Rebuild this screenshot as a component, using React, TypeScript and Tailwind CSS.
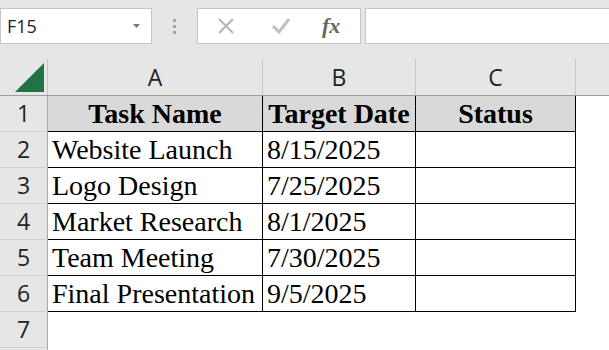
import React from 'react';

type Task = { name: string; date: string; status: string };

const tasks: Task[] = [
  { name: 'Website Launch', date: '8/15/2025', status: '' },
  { name: 'Logo Design', date: '7/25/2025', status: '' },
  { name: 'Market Research', date: '8/1/2025', status: '' },
  { name: 'Team Meeting', date: '7/30/2025', status: '' },
  { name: 'Final Presentation', date: '9/5/2025', status: '' },
];

const RowHead: React.FC<{ n: number }> = ({ n }) => (
  <div className="w-[48px] h-full shrink-0 flex items-center justify-center border-r border-b border-r-[#a8a8a8] border-b-[#cfcfcf] bg-[#e6e6e6] text-[23px] text-[#222]">
    {n}
  </div>
);

const Cell: React.FC<{ w: string; header?: boolean; children?: React.ReactNode }> = ({
  w,
  header,
  children,
}) => (
  <div
    className={`${w} h-full shrink-0 flex items-center border-r border-b border-black font-['Liberation_Serif','Times_New_Roman',serif] text-[28px] text-black ${
      header ? 'bg-[#d9d9d9] font-bold justify-center' : 'bg-white pl-[4px]'
    }`}
  >
    {children}
  </div>
);

const App: React.FC = () => {
  return (
    <div className="w-[609px] h-[350px] overflow-hidden bg-[#e6e6e6] font-['Open_Sans',sans-serif]">
      {/* Formula bar */}
      <div className="h-[59px] flex items-start pt-[8px]">
        <div className="w-[152px] h-[36px] shrink-0 bg-white border border-[#c6c6c6] flex items-center justify-between pl-[6px] pr-[11px]">
          <span className="text-[18px] text-[#222]">F15</span>
          <svg width="7" height="4" viewBox="0 0 7 4">
            <path d="M0 0 H7 L3.5 4 Z" fill="#777" />
          </svg>
        </div>
        <div className="w-[45px] h-[36px] shrink-0 flex flex-col items-center justify-center gap-[3px]">
          <div className="w-[3px] h-[3px] bg-[#a6a6a6]" />
          <div className="w-[3px] h-[3px] bg-[#a6a6a6]" />
          <div className="w-[3px] h-[3px] bg-[#a6a6a6]" />
        </div>
        <div className="w-[164px] h-[36px] shrink-0 bg-white border border-[#c6c6c6] flex items-center pl-[19px]">
          <svg width="18" height="18" viewBox="0 0 18 18" className="mr-[36px]">
            <path d="M2 2 L16 16 M16 2 L2 16" stroke="#b4b4b4" strokeWidth="2" />
          </svg>
          <svg width="20" height="18" viewBox="0 0 20 18" className="mr-[31px]">
            <path d="M2 9 L8 15 L18 2" stroke="#c0c0c0" strokeWidth="3" fill="none" />
          </svg>
          <span className="font-['Liberation_Serif',serif] italic font-bold text-[22px] text-[#666] leading-none">
            fx
          </span>
        </div>
        <div className="w-[260px] h-[36px] shrink-0 ml-[4px] bg-white border border-[#c6c6c6]" />
      </div>

      {/* Column headers */}
      <div className="h-[37px] flex border-b border-[#9e9e9e] text-[23px] text-[#222]">
        <div className="w-[48px] shrink-0 border-r border-[#c6c6c6] flex items-end justify-end pr-[3px] pb-[3px]">
          <svg width="29" height="29" viewBox="0 0 29 29">
            <polygon points="0,29 29,0 29,29" fill="#217346" />
          </svg>
        </div>
        <div className="w-[215px] shrink-0 border-r border-[#c6c6c6] flex items-center justify-center">A</div>
        <div className="w-[153px] shrink-0 border-r border-[#c6c6c6] flex items-center justify-center">B</div>
        <div className="w-[160px] shrink-0 border-r border-[#c6c6c6] flex items-center justify-center">C</div>
        <div className="flex-1" />
      </div>

      {/* Row 1 */}
      <div className="h-[36px] flex">
        <RowHead n={1} />
        <Cell w="w-[215px]" header>Task Name</Cell>
        <Cell w="w-[153px]" header>Target Date</Cell>
        <Cell w="w-[160px]" header>Status</Cell>
        <div className="flex-1 bg-white" />
      </div>

      {tasks.map((t, i) => (
        <div key={t.name} className="h-[36px] flex">
          <RowHead n={i + 2} />
          <Cell w="w-[215px]">{t.name}</Cell>
          <Cell w="w-[153px]">{t.date}</Cell>
          <Cell w="w-[160px]">{t.status}</Cell>
          <div className="flex-1 bg-white" />
        </div>
      ))}

      {/* Row 7 */}
      <div className="h-[36px] flex">
        <RowHead n={7} />
        <div className="flex-1 bg-white" />
      </div>
      <div className="h-[36px] flex">
        <div className="w-[48px] h-full shrink-0 border-r border-[#a8a8a8] bg-[#e6e6e6]" />
        <div className="flex-1 bg-white" />
      </div>
    </div>
  );
};

export default App;
